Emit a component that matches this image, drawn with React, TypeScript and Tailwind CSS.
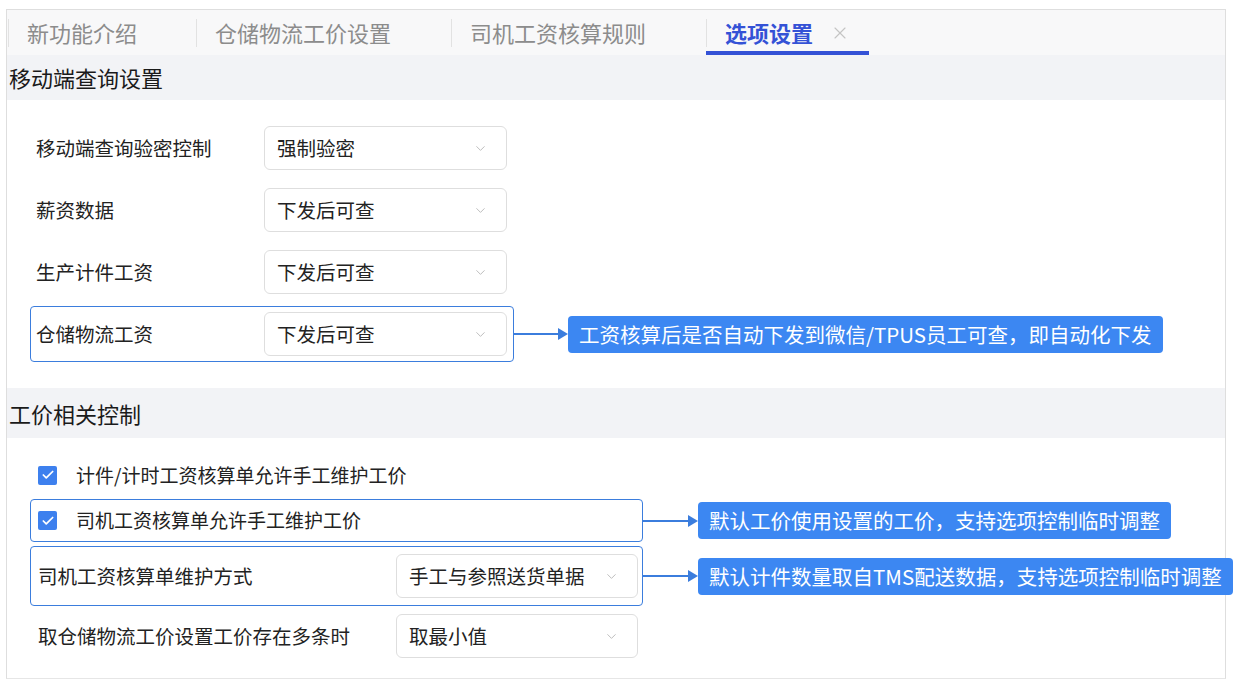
import { X, ChevronDown, Check } from "lucide-react";

const FONT = { fontFamily: '"Noto Sans CJK SC", "Noto Sans", sans-serif' };

function Select({ value, width = "w-[243px]" }: { value: string; width?: string }) {
  return (
    <div
      className={`flex h-[44px] ${width} shrink-0 items-center justify-between rounded-md border border-[#dedede] bg-white pl-[12px] pr-[18px] text-[19.5px] text-[#222]`}
    >
      <span>{value}</span>
      <ChevronDown className="h-[15px] w-[15px] text-[#b4b4b4]" strokeWidth={1.4} />
    </div>
  );
}

function Arrow({ width }: { width: string }) {
  return (
    <div className={`flex ${width} shrink-0 items-center`}>
      <div className="h-[2px] flex-1 bg-[#3b7ddd]" />
      <div className="h-0 w-0 border-y-[6px] border-l-[10px] border-y-transparent border-l-[#3b7ddd]" />
    </div>
  );
}

function Callout({ text }: { text: string }) {
  return (
    <div className="flex h-[37px] shrink-0 items-center whitespace-nowrap rounded-[4px] bg-[#3c87f2] px-[11px] text-[20.5px] text-white">
      {text}
    </div>
  );
}

function CheckBox() {
  return (
    <div className="flex h-[19px] w-[19px] shrink-0 items-center justify-center rounded-[2px] bg-[#3d80ee]">
      <Check className="h-[14px] w-[14px] text-white" strokeWidth={3} />
    </div>
  );
}

function Row1({ label, value, boxed }: { label: string; value: string; boxed?: boolean }) {
  return (
    <div
      className={`flex h-[56px] w-[484px] items-center rounded-[4px] border-[1.5px] pl-[5px] pr-[6px] ${
        boxed ? "border-[#3b7ddd]" : "border-transparent"
      }`}
    >
      <div className="w-[228px] text-[19.5px] text-[#222]">{label}</div>
      <Select value={value} />
    </div>
  );
}

const tabs = [
  { label: "新功能介绍", w: "w-[188px]" },
  { label: "仓储物流工价设置", w: "w-[255px]" },
  { label: "司机工资核算规则", w: "w-[255px]" },
];

export default function App() {
  return (
    <div className="h-[682px] w-[1245px] overflow-hidden bg-white pl-[6px] pt-[9px]" style={FONT}>
      <div className="h-[670px] w-[1220px] border border-[#dedede] border-b-[#e6e6e6]">
        {/* Tabs */}
        <div className="flex h-[45px] items-stretch bg-[#f8f8f9] pl-[1px]">
          {tabs.map((t) => (
            <div key={t.label} className={`flex ${t.w} items-center`}>
              <div className="h-[28px] w-px bg-[#e2e2e2]" />
              <span className="pl-[18px] text-[22px] text-[#8c8c8c]">{t.label}</span>
            </div>
          ))}
          <div className="relative flex w-[163px] items-center">
            <div className="h-[28px] w-px bg-[#e2e2e2]" />
            <span className="pl-[18px] text-[22px] font-semibold text-[#3452d6]">选项设置</span>
            <X className="ml-[17px] h-[20px] w-[20px] text-[#c4c4c4]" strokeWidth={1.4} />
            <div className="absolute bottom-0 left-0 right-0 h-[4px] bg-[#3452d6]" />
          </div>
        </div>

        {/* Section 1 */}
        <div className="flex h-[45px] items-center bg-[#f2f3f6] pl-[2px] text-[22px] text-[#1a1a1a]">
          移动端查询设置
        </div>
        <div className="flex flex-col gap-[6px] pb-[26px] pl-[23px] pt-[20px]">
          <Row1 label="移动端查询验密控制" value="强制验密" />
          <Row1 label="薪资数据" value="下发后可查" />
          <Row1 label="生产计件工资" value="下发后可查" />
          <div className="flex items-center">
            <Row1 label="仓储物流工资" value="下发后可查" boxed />
            <Arrow width="w-[54px]" />
            <Callout text="工资核算后是否自动下发到微信/TPUS员工可查，即自动化下发" />
          </div>
        </div>

        {/* Section 2 */}
        <div className="flex h-[50px] items-center bg-[#f2f3f6] pl-[2px] text-[22px] text-[#1a1a1a]">
          工价相关控制
        </div>
        <div className="flex flex-col pl-[23px] pt-[16px]">
          <div className="flex h-[42px] items-center gap-[19px] pl-[8px] text-[19px] text-[#222]">
            <CheckBox />
            <span>计件/计时工资核算单允许手工维护工价</span>
          </div>
          <div className="mt-[3px] flex items-center">
            <div className="flex h-[43px] w-[613px] items-center gap-[19px] rounded-[4px] border-[1.5px] border-[#3b7ddd] pl-[7px] text-[19px] text-[#222]">
              <CheckBox />
              <span>司机工资核算单允许手工维护工价</span>
            </div>
            <Arrow width="w-[55px]" />
            <Callout text="默认工价使用设置的工价，支持选项控制临时调整" />
          </div>
          <div className="mt-[4px] flex items-center">
            <div className="flex h-[60px] w-[613px] items-center rounded-[4px] border-[1.5px] border-[#3b7ddd] pl-[7px] pr-[4px] text-[19.5px] text-[#222]">
              <div className="w-[358px]">司机工资核算单维护方式</div>
              <Select value="手工与参照送货单据" width="w-[242px]" />
            </div>
            <Arrow width="w-[55px]" />
            <Callout text="默认计件数量取自TMS配送数据，支持选项控制临时调整" />
          </div>
          <div className="flex h-[60px] w-[613px] items-center pl-[8px] pr-[4px] text-[19.5px] text-[#222]">
            <div className="w-[358px]">取仓储物流工价设置工价存在多条时</div>
            <Select value="取最小值" width="w-[242px]" />
          </div>
        </div>
      </div>
    </div>
  );
}
